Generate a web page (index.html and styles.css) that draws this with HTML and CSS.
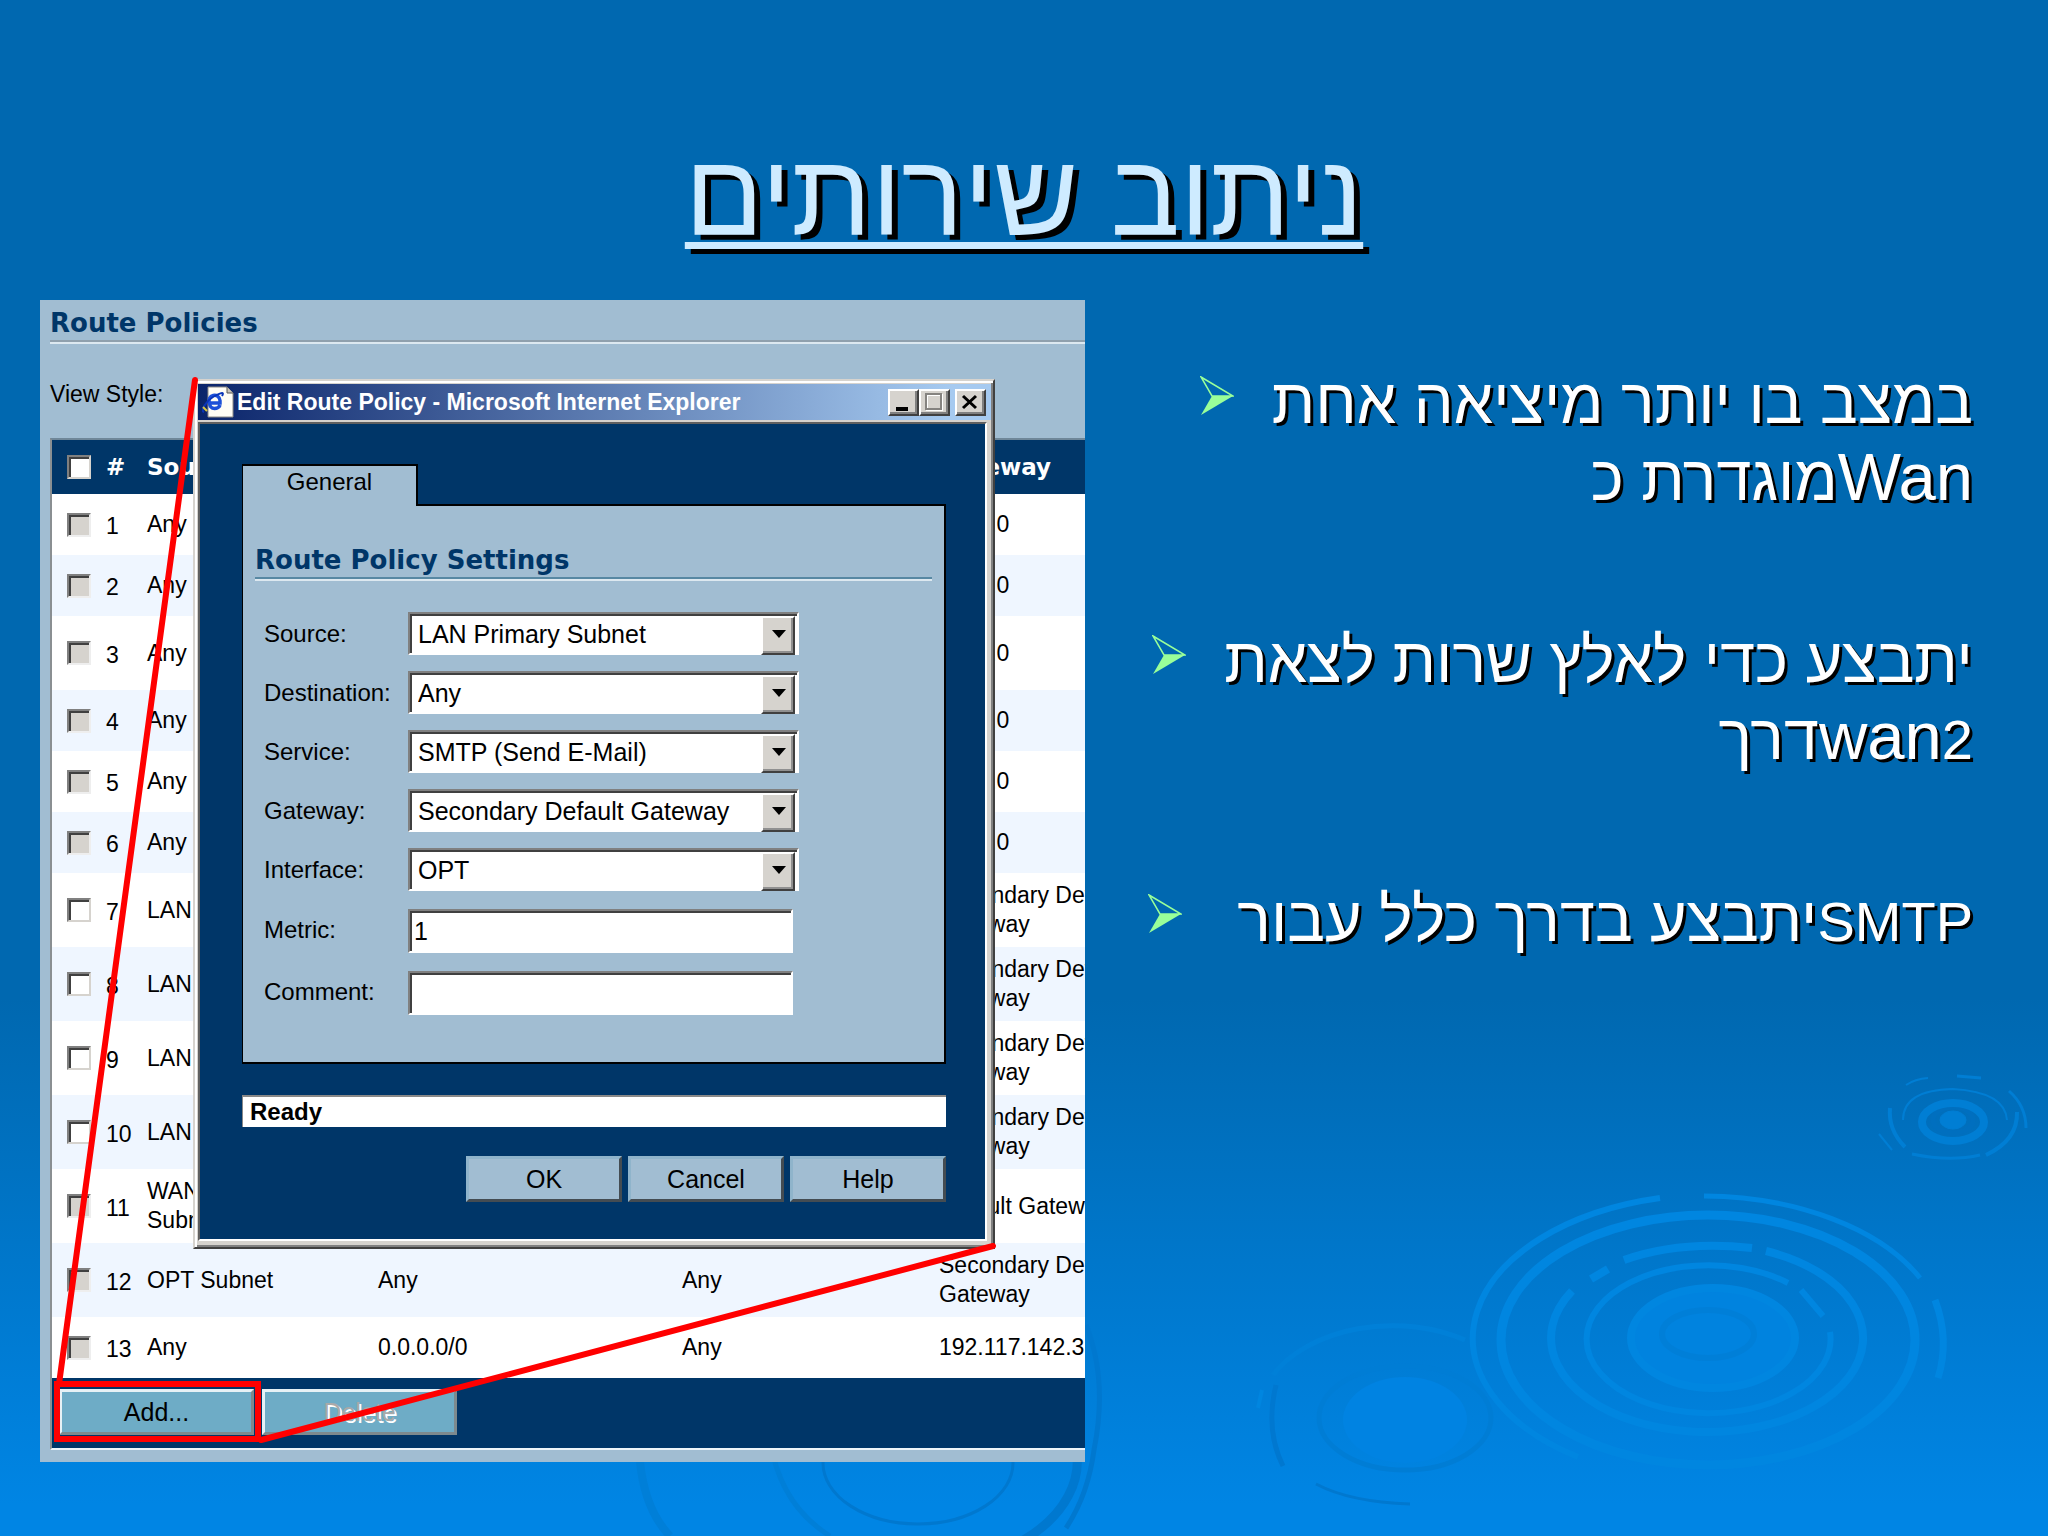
FILE: index.html
```
<!DOCTYPE html>
<html lang="he">
<head>
  <meta charset="UTF-8" />
  <meta name="viewport" content="width=device-width, initial-scale=1.0" />
  <title>ניתוב שירותים</title>
  <link rel="stylesheet" href="styles.css">
</head>
<body>
  <!-- water ripples behind the slide -->
  <svg class="ripples" width="1448" height="496" viewBox="600 1040 1448 496" fill="none" aria-hidden="true">
    <g stroke="#0078cf" stroke-width="5">
      <ellipse cx="918" cy="1463" rx="95" ry="61" stroke-width="3" />
      <path d="M1074 1440 A158 105 0 0 1 1020 1542" stroke-width="9" />
      <path d="M1086 1325 Q1108 1380 1094 1450 Q1088 1495 1066 1528" />
      <path d="M770 1440 Q780 1505 830 1536" stroke="#007fd8" />
      <path d="M640 1462 Q645 1510 670 1536" stroke="#007fd8" stroke-width="8" />
    </g>
    <g>
      <path d="M1273 1375 A135 92 0 0 1 1465 1340" stroke="#0080d8" stroke-width="5" />
      <path d="M1258 1408 L1262 1390" stroke="#0086e0" stroke-width="4" />
      <path d="M1276 1385 Q1265 1430 1283 1466" stroke="#0078d0" stroke-width="5" />
      <path d="M1316 1484 Q1350 1502 1410 1504" stroke="#0078cf" stroke-width="3" />
      <ellipse cx="1405" cy="1418" rx="86" ry="52" stroke="#007dd5" stroke-width="5" />
      <ellipse cx="1405" cy="1420" rx="62" ry="43" fill="#0083e2" />
    </g>
    <g stroke="#0086e0">
      <path d="M1660 1198 A242 144 0 0 0 1578 1457" stroke-width="6" />
      <path d="M1704 1196 A242 144 0 0 1 1920 1278" stroke-width="5" />
      <path d="M1935 1300 Q1950 1340 1938 1378" stroke-width="7" />
      <ellipse cx="1708" cy="1340" rx="207" ry="125" stroke-width="9" />
      <path d="M1624 1260 Q1680 1240 1752 1248" stroke-width="8" />
      <path d="M1591 1279 L1608 1269" stroke-width="8" />
      <path d="M1766 1251 A156 94 0 1 1 1572 1291" stroke-width="8" />
      <path d="M1788 1283 A122 74 0 1 0 1830 1332" stroke-width="6" />
      <path d="M1801 1290 L1823 1316" stroke-width="6" />
      <ellipse cx="1713" cy="1338" rx="82" ry="50" fill="#0083df" stroke-width="8" />
      <ellipse cx="1708" cy="1334" rx="46" ry="24" stroke="#007fd8" stroke-width="6" />
    </g>
    <g stroke="#007ed4">
      <ellipse cx="1953" cy="1120" rx="13" ry="9" fill="#007ed4" />
      <ellipse cx="1953" cy="1120" rx="20" ry="13" stroke="#006fbf" stroke-width="5" />
      <ellipse cx="1953" cy="1122" rx="31" ry="19" stroke-width="8" />
      <path d="M1903 1120 Q1903 1090 1953 1089 Q2005 1092 2007 1120" stroke-width="2" />
      <path d="M1906 1085 Q1915 1079 1928 1078" stroke-width="2" />
      <path d="M1957 1076 L1981 1078" stroke-width="3" />
      <path d="M2009 1091 Q2026 1106 2026 1128" stroke-width="3" />
      <path d="M1890 1108 Q1888 1130 1905 1147" stroke-width="4" />
      <path d="M1879 1134 L1892 1150" stroke-width="2" />
      <path d="M1912 1154 Q1950 1162 1980 1155" stroke-width="3" />
      <path d="M1986 1155 Q2018 1140 2017 1112" stroke-width="4" />
    </g>
  </svg>

  <h1 class="slide-title">ניתוב שירותים</h1>

  <main class="slide">
    <section class="policies" dir="ltr" lang="en">
      <h2 class="section-title">Route Policies</h2>
      <p class="view-style">View Style:</p>

      <div class="table-box">
        <table class="routes">
          <colgroup>
            <col class="col-check"><col class="col-num"><col class="col-source"><col class="col-dest"><col class="col-service"><col class="col-gateway">
          </colgroup>
          <thead>
            <tr>
              <th><input type="checkbox" class="check" aria-label="Select all" /></th>
              <th>#</th><th>Source</th><th></th><th></th><th>Gateway</th>
            </tr>
          </thead>
          <tbody>
            <tr><td><input type="checkbox" class="check" aria-label="Route 1" disabled /></td><td class="num">1</td><td>Any</td><td></td><td></td><td>0.0.0.0</td></tr>
            <tr><td><input type="checkbox" class="check" aria-label="Route 2" disabled /></td><td class="num">2</td><td>Any</td><td></td><td></td><td>0.0.0.0</td></tr>
            <tr class="tall"><td><input type="checkbox" class="check" aria-label="Route 3" disabled /></td><td class="num">3</td><td>Any</td><td></td><td></td><td>0.0.0.0</td></tr>
            <tr><td><input type="checkbox" class="check" aria-label="Route 4" disabled /></td><td class="num">4</td><td>Any</td><td></td><td></td><td>0.0.0.0</td></tr>
            <tr><td><input type="checkbox" class="check" aria-label="Route 5" disabled /></td><td class="num">5</td><td>Any</td><td></td><td></td><td>0.0.0.0</td></tr>
            <tr><td><input type="checkbox" class="check" aria-label="Route 6" disabled /></td><td class="num">6</td><td>Any</td><td></td><td></td><td>0.0.0.0</td></tr>
            <tr class="tall"><td><input type="checkbox" class="check" aria-label="Route 7" /></td><td class="num">7</td><td>LAN</td><td></td><td></td><td>Secondary Default Gateway</td></tr>
            <tr class="tall"><td><input type="checkbox" class="check" aria-label="Route 8" /></td><td class="num">8</td><td>LAN</td><td></td><td></td><td>Secondary Default Gateway</td></tr>
            <tr class="tall"><td><input type="checkbox" class="check" aria-label="Route 9" /></td><td class="num">9</td><td>LAN</td><td></td><td></td><td>Secondary Default Gateway</td></tr>
            <tr class="tall"><td><input type="checkbox" class="check" aria-label="Route 10" /></td><td class="num">10</td><td>LAN</td><td></td><td></td><td>Secondary Default Gateway</td></tr>
            <tr class="tall"><td><input type="checkbox" class="check" aria-label="Route 11" disabled /></td><td class="num">11</td><td>WAN<br>Subnet</td><td></td><td></td><td>Default Gateway</td></tr>
            <tr class="tall"><td><input type="checkbox" class="check" aria-label="Route 12" disabled /></td><td class="num">12</td><td>OPT Subnet</td><td>Any</td><td>Any</td><td>Secondary Default Gateway</td></tr>
            <tr><td><input type="checkbox" class="check" aria-label="Route 13" disabled /></td><td class="num">13</td><td>Any</td><td>0.0.0.0/0</td><td>Any</td><td>192.117.142.33</td></tr>
          </tbody>
        </table>
        <div class="table-actions">
          <button type="button" class="action">Add...</button>
          <button type="button" class="action" disabled>Delete</button>
        </div>
      </div>

      <div class="dialog" role="dialog" aria-labelledby="dialogTitle">
        <div class="title-bar">
          <svg class="ie-icon" width="32" height="32" viewBox="0 0 32 32" aria-hidden="true">
            <path d="M6 1h19l6 6v24H6z" fill="#fffdf5" stroke="#8d8b86" />
            <path d="M25 1v6h6" fill="#c9c5bb" stroke="#555" />
            <path d="M18 17H7.500a5.500 5.500 0 1 1 10.500-2.500z M18 19c-1 4-10 6-10.500-2" fill="none" stroke="#1d50d8" stroke-width="3.500" />
            <path d="M2 26c-4-1 2-11 9-15S23 5 20 10" fill="none" stroke="#0a35b8" stroke-width="2" />
            <path d="M1 21l4 4" stroke="#d8c640" stroke-width="2" />
          </svg>
          <span id="dialogTitle" class="dialog-title">Edit Route Policy - Microsoft Internet Explorer</span>
          <span class="window-buttons">
            <button type="button" aria-label="Minimize"><svg width="27" height="23" viewBox="0 0 27 23"><path d="M6 16h12v4H6z" /></svg></button>
            <button type="button" aria-label="Maximize"><svg width="27" height="23" viewBox="0 0 27 23"><path d="M6 4h15v15H6z" fill="none" stroke="#fff" stroke-width="2" /><path d="M5 3h15v15H5z" fill="none" stroke="#858380" stroke-width="2" /></svg></button>
            <button type="button" class="close" aria-label="Close"><svg width="27" height="23" viewBox="0 0 27 23"><path d="M6 5l13 12M19 5L6 17" stroke="#000" stroke-width="3" /></svg></button>
          </span>
        </div>
        <form class="dialog-body">
          <div class="tab">General</div>
          <div class="tab-panel">
            <h3 class="section-title">Route Policy Settings</h3>
            <div class="fields">
              <label for="source">Source:</label>
              <span class="select"><select id="source"><option>LAN Primary Subnet</option></select></span>
              <label for="destination">Destination:</label>
              <span class="select"><select id="destination"><option>Any</option></select></span>
              <label for="service">Service:</label>
              <span class="select"><select id="service"><option>SMTP (Send E-Mail)</option></select></span>
              <label for="gateway">Gateway:</label>
              <span class="select"><select id="gateway"><option>Secondary Default Gateway</option></select></span>
              <label for="interface">Interface:</label>
              <span class="select"><select id="interface"><option>OPT</option></select></span>
              <label for="metric">Metric:</label>
              <input type="text" id="metric" value="1" />
              <label for="comment">Comment:</label>
              <input type="text" id="comment" />
            </div>
          </div>
          <div class="status">Ready</div>
          <div class="dialog-actions">
            <button type="button">OK</button>
            <button type="button">Cancel</button>
            <button type="button">Help</button>
          </div>
        </form>
      </div>

      <!-- red callout from the Add button to the dialog -->
      <svg class="callout" width="960" height="1150" viewBox="0 0 960 1150" aria-hidden="true">
        <path d="M155 80L19 1084M221 1140L953 946" />
        <path d="M17 1084h201v55H17z" />
      </svg>
    </section>

    <ul class="notes">
      <li><svg class="arrow" width="34" height="40" viewBox="0 0 34 40" aria-hidden="true"><path d="M1 1l32 19H12z" fill="none" stroke="#9f9" stroke-width="1.500" /><path d="M12 20h21L1 39z" fill="#9f9" /></svg>במצב בו יותר מיציאה אחת<br>מוגדרת כ<span class="big">Wan</span></li>
      <li><svg class="arrow" width="34" height="40" viewBox="0 0 34 40" aria-hidden="true"><path d="M1 1l32 19H12z" fill="none" stroke="#9f9" stroke-width="1.500" /><path d="M12 20h21L1 39z" fill="#9f9" /></svg>יתבצע כדי לאלץ שרות לצאת<br>דרך<span class="big">wan</span><span class="small">2</span></li>
      <li><svg class="arrow" width="34" height="40" viewBox="0 0 34 40" aria-hidden="true"><path d="M1 1l32 19H12z" fill="none" stroke="#9f9" stroke-width="1.500" /><path d="M12 20h21L1 39z" fill="#9f9" /></svg>&nbsp;יתבצע בדרך כלל עבור<span class="small">SMTP</span></li>
    </ul>
  </main>
</body>
</html>
```

FILE: styles.css
```
* {
  box-sizing: border-box;
}
body {
  margin: 0;
  min-height: 100vh;
  position: relative;
  background: linear-gradient(#0068b0 0, #0068b0 65%, #0085e4 98%);
  color: #fff;
  font-family: "Liberation Sans", Arial, sans-serif;
}
.ripples {
  position: absolute;
  right: 0;
  bottom: 0;
}
.slide-title {
  margin: 0;
  padding-top: 120px;
  height: 300px;
  color: #ceebff;
  font-size: 116px;
  font-weight: normal;
  line-height: 150px;
  text-align: center;
  text-decoration: underline 7px;
  text-decoration-skip-ink: none;
  text-underline-offset: 7px;
  text-shadow: 6px 5px 0 #000;
}
.slide {
  position: relative;
  display: flex;
  align-items: flex-start;
  padding: 0 75px 0 40px;
}

/* route policies screen */
.policies {
  position: relative;
  flex: 0 0 1045px;
  padding: 0 0 12px 10px;
  background: #a1bdd2;
  color: #000;
  font-size: 23px;
  line-height: 29px;
  overflow: hidden;
}
.section-title {
  margin: 0;
  padding-top: 7px;
  border-bottom: 2px solid #8fa0ad;
  box-shadow: 0 2px 0 #dce8f0;
  color: #003668;
  font-family: "DejaVu Sans", sans-serif;
  font-size: 26px;
  font-weight: bold;
  line-height: 33px;
}
.view-style {
  margin: 0;
  padding: 38px 0 29px;
}
.table-box {
  border: solid;
  border-width: 2px 0 2px 2px;
  border-color: #6f8799 #fff #eef5fa #8a8f92;
  overflow: hidden;
}
.routes {
  width: 1099px;
  border-collapse: collapse;
  table-layout: fixed;
  background: #fff;
}
.col-check { width: 46px; }
.col-num { width: 41px; }
.col-source { width: 231px; }
.col-dest { width: 304px; }
.col-service { width: 257px; }
.routes th {
  height: 54px;
  padding: 0 0 0 8px;
  background: #003668;
  color: #fff;
  font-family: "DejaVu Sans", sans-serif;
  font-size: 23px;
  text-align: left;
}
.routes td {
  height: 61px;
  padding: 0 0 0 8px;
}
.routes .tall td {
  height: 74px;
}
.routes tbody tr:nth-child(even) {
  background: #eff6ff;
}
.routes td.num {
  padding-top: 4px;
}
.check {
  appearance: none;
  display: block;
  width: 24px;
  height: 24px;
  margin: 0 0 0 7px;
  border: 2px solid;
  border-color: #808080 #d6d3ce #d6d3ce #808080;
  background: #fff;
  box-shadow: inset 2px 2px 0 #404040;
}
.check:disabled {
  border-color: #808080 #eee #eee #808080;
  background: #d6d3ce;
}
.table-actions {
  display: flex;
  gap: 8px;
  padding: 11px 7px 13px;
  background: #003668;
}
.action {
  width: 195px;
  height: 46px;
  padding: 0;
  border: 3px solid;
  border-color: #e6f1f5 #7d8a8e #7d8a8e #e6f1f5;
  background: #6eacc6;
  color: #000;
  font-family: inherit;
  font-size: 25px;
}
.action:disabled {
  color: #a9a9a9;
  text-shadow: 2px 2px 0 #fff;
}

/* popup window */
.dialog {
  position: absolute;
  left: 153px;
  top: 79px;
  width: 802px;
  padding: 3px 2px 2px 3px;
  border: 2px solid;
  border-color: #d6d3ce #404040 #404040 #d6d3ce;
  background: #d6d3ce;
  box-shadow: inset 2px 2px 0 #fff, inset -2px -2px 0 #808080;
}
.title-bar {
  display: flex;
  align-items: center;
  height: 36px;
  padding: 0 5px 0 4px;
  background: linear-gradient(90deg, #0a246a, #a6caf0 95%);
}
.dialog-title {
  flex: 1;
  padding-left: 3px;
  color: #fff;
  font-size: 23px;
  font-weight: bold;
}
.window-buttons {
  display: flex;
}
.window-buttons button {
  width: 31px;
  height: 27px;
  padding: 0;
  border: 2px solid;
  border-color: #fff #404040 #404040 #fff;
  background: #d6d3ce;
  box-shadow: inset -2px -2px 0 #808080;
}
.window-buttons svg {
  display: block;
}
.window-buttons .close {
  margin-left: 5px;
}
.dialog-body {
  margin: 2px 4px 4px 0;
  padding: 40px 39px 37px 42px;
  border: 2px solid;
  border-color: #606060 #fff #fff #606060;
  background: #003668;
  font-size: 24px;
}
.tab {
  position: relative;
  width: 176px;
  height: 42px;
  margin-bottom: -2px;
  padding-top: 1px;
  border: solid #000;
  border-width: 2px 2px 0 1px;
  background: #a1bdd2;
  text-align: center;
}
.tab-panel {
  padding: 31px 12px 47px 12px;
  border: 2px solid #000;
  border-left-width: 1px;
  background: #a1bdd2;
}
.tab-panel .section-title {
  border-color: #5788a3;
}
.fields {
  display: grid;
  grid-template-columns: 144px 391px;
  row-gap: 16px;
  align-items: center;
  padding: 33px 0 0 9px;
}
.fields label {
  line-height: 40px;
}
.fields select,
.fields input {
  appearance: none;
  display: block;
  width: 391px;
  height: 43px;
  padding: 0 8px;
  border: 2px solid;
  border-color: #808080 #fff #fff #808080;
  border-radius: 0;
  background: #fff;
  box-shadow: inset 2px 2px 0 #404040;
  color: #000;
  font-family: inherit;
  font-size: 25px;
}
.fields input {
  width: 385px;
  height: 44px;
  margin-top: 2px;
  padding: 0 4px;
}
.select {
  position: relative;
}
/* drop-down button drawn over the select */
.select::before {
  content: "";
  position: absolute;
  right: 4px;
  top: 4px;
  width: 30px;
  height: 35px;
  border: 2px solid;
  border-color: #fff #404040 #404040 #fff;
  background: #d6d3ce;
  box-shadow: inset -2px -2px 0 #909090;
  pointer-events: none;
}
.select::after {
  content: "";
  position: absolute;
  right: 13px;
  top: 18px;
  border: 7px solid transparent;
  border-top: 8px solid #000;
  border-bottom: 0;
  pointer-events: none;
}
.status {
  height: 32px;
  margin-top: 31px;
  padding-left: 7px;
  border: solid #888;
  border-width: 2px 0 0 1px;
  background: #fff;
  font-weight: bold;
}
.dialog-actions {
  display: flex;
  justify-content: flex-end;
  gap: 6px;
  margin-top: 29px;
}
.dialog-actions button {
  width: 156px;
  height: 46px;
  padding: 0;
  border: 3px solid;
  border-color: #8fb4cb #444c52 #444c52 #8fb4cb;
  background: #a1bdd2;
  color: #000;
  font-family: inherit;
  font-size: 25px;
}
.callout {
  position: absolute;
  left: 0;
  top: 0;
  fill: none;
  stroke: #f00;
  stroke-width: 6px;
  stroke-linecap: round;
}

/* slide text */
.notes {
  flex: 1;
  margin: 0;
  padding: 63px 0 0;
  direction: ltr;
  list-style: none;
  font-size: 63px;
  line-height: 77px;
  text-align: right;
  text-shadow: 3px 3px 0 #000;
}
.notes li {
  margin-bottom: 105px;
}
.arrow {
  margin-right: 38px;
  vertical-align: 7px;
}
.big,
.small {
  line-height: 1;
}
.big {
  font-size: 67px;
}
.small {
  font-size: 56px;
}
```
